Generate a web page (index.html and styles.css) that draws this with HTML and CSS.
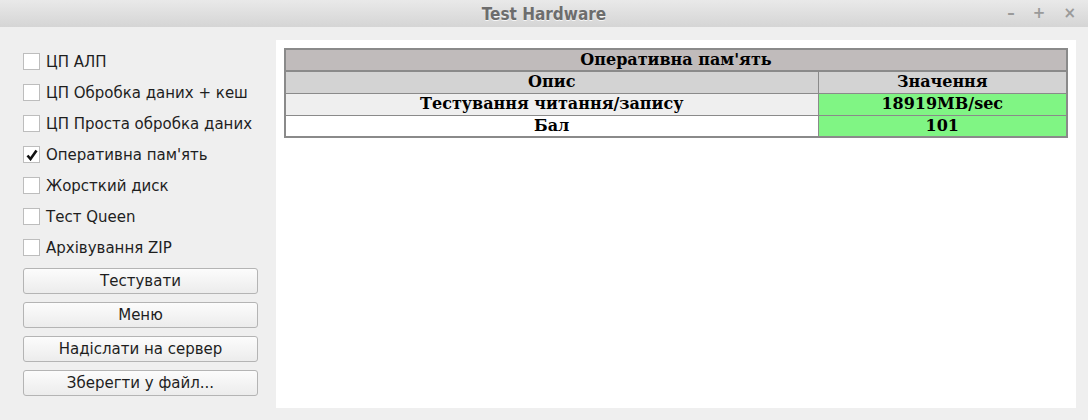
FILE: index.html
```html
<!DOCTYPE html>
<html>
<head>
<meta charset="utf-8">
<link rel="stylesheet" href="styles.css">
</head>
<body>
<div class="window">
  <div class="titlebar">
    <div class="title">Test Hardware</div>
    <div class="controls">
      <span class="ctl">&#8211;</span>
      <span class="ctl">+</span>
      <span class="ctl">&#215;</span>
    </div>
  </div>
  <div class="content">
    <div class="sidebar">
      <div class="checks">
        <label class="check"><span class="box"></span><span>ЦП АЛП</span></label>
        <label class="check"><span class="box"></span><span>ЦП Обробка даних + кеш</span></label>
        <label class="check"><span class="box"></span><span>ЦП Проста обробка даних</span></label>
        <label class="check"><span class="box checked"><svg width="12" height="12" viewBox="0 0 12 12"><path d="M1.5 6.5 L4.5 10 L10.5 1.5" fill="none" stroke="#111" stroke-width="2.6" stroke-linejoin="miter"/></svg></span><span>Оперативна пам'ять</span></label>
        <label class="check"><span class="box"></span><span>Жорсткий диск</span></label>
        <label class="check"><span class="box"></span><span>Тест Queen</span></label>
        <label class="check"><span class="box"></span><span>Архівування ZIP</span></label>
      </div>
      <div class="buttons">
        <button class="btn">Тестувати</button>
        <button class="btn">Меню</button>
        <button class="btn">Надіслати на сервер</button>
        <button class="btn">Зберегти у файл...</button>
      </div>
    </div>
    <div class="panel">
      <table class="results">
        <tr class="caption"><td colspan="2">Оперативна пам'ять</td></tr>
        <tr class="head"><td class="c1">Опис</td><td class="c2">Значення</td></tr>
        <tr class="r1"><td>Тестування читання/запису</td><td class="ok">18919MB/sec</td></tr>
        <tr class="r2"><td>Бал</td><td class="ok">101</td></tr>
      </table>
    </div>
  </div>
</div>
</body>
</html>
```
FILE: styles.css
```css
* { box-sizing: border-box; }
html, body { margin: 0; padding: 0; }
body {
  width: 1088px;
  height: 420px;
  background: #efefef;
  font-family: "DejaVu Sans", sans-serif;
  overflow: hidden;
}
.window { display: flex; flex-direction: column; height: 420px; }
.titlebar {
  height: 27px;
  background: linear-gradient(#e9e9e9, #d5d5d5);
  display: flex;
  align-items: center;
  justify-content: center;
  position: relative;
}
.title {
  font-family: "DejaVu Sans Condensed", "DejaVu Sans", sans-serif;
  font-stretch: condensed;
  font-weight: bold;
  font-size: 17px;
  color: #6d6d6d;
  text-shadow: 0 1px 0 #f6f6f6;
}
.controls {
  position: absolute;
  right: 12px;
  top: 4px;
  display: flex;
  gap: 18px;
  font-family: "DejaVu Sans", sans-serif;
  font-weight: bold;
  font-size: 15px;
  color: #9a9a9a;
}
.content {
  flex: 1;
  display: flex;
  padding: 13px 12px 12px 23px;
  gap: 18px;
}
.sidebar { width: 235px; display: flex; flex-direction: column; }
.checks { display: flex; flex-direction: column; padding-top: 6px; }
.check {
  height: 31px;
  display: flex;
  align-items: center;
  gap: 6px;
  font-size: 15px;
  color: #1e1e1e;
}
.box {
  width: 17px;
  height: 17px;
  border: 1px solid #bdbdbd;
  background: #fff;
  display: flex;
  align-items: center;
  justify-content: center;
}
.buttons { display: flex; flex-direction: column; gap: 8px; margin-top: 5px; }
.btn {
  height: 26px;
  width: 235px;
  border: 1px solid #b4b4b4;
  border-radius: 3px;
  background: linear-gradient(#fcfcfc, #ececec);
  font-family: "DejaVu Sans", sans-serif;
  font-size: 15px;
  color: #1e1e1e;
  padding: 0;
}
.panel {
  flex: 1;
  background: #fff;
  padding: 8px 8px;
}
.results {
  width: 100%;
  border-collapse: collapse;
  font-family: "DejaVu Serif", serif;
  font-weight: bold;
  font-size: 16px;
  color: #000;
  text-align: center;
  border: 2px solid #8a8a8a;
}
.results td {
  border: 1px solid #8a8a8a;
  height: 22px;
  padding: 0;
  line-height: 20px;
}
.caption td { background: #c0bbbb; border-bottom: 2px solid #8a8a8a; }
.head td { background: #d3d3d3; }
.head .c1 { width: 533px; }
.r1 td { background: #efefef; }
.r2 td { background: #fff; }
.results td.ok { background: #80f584; }
```
